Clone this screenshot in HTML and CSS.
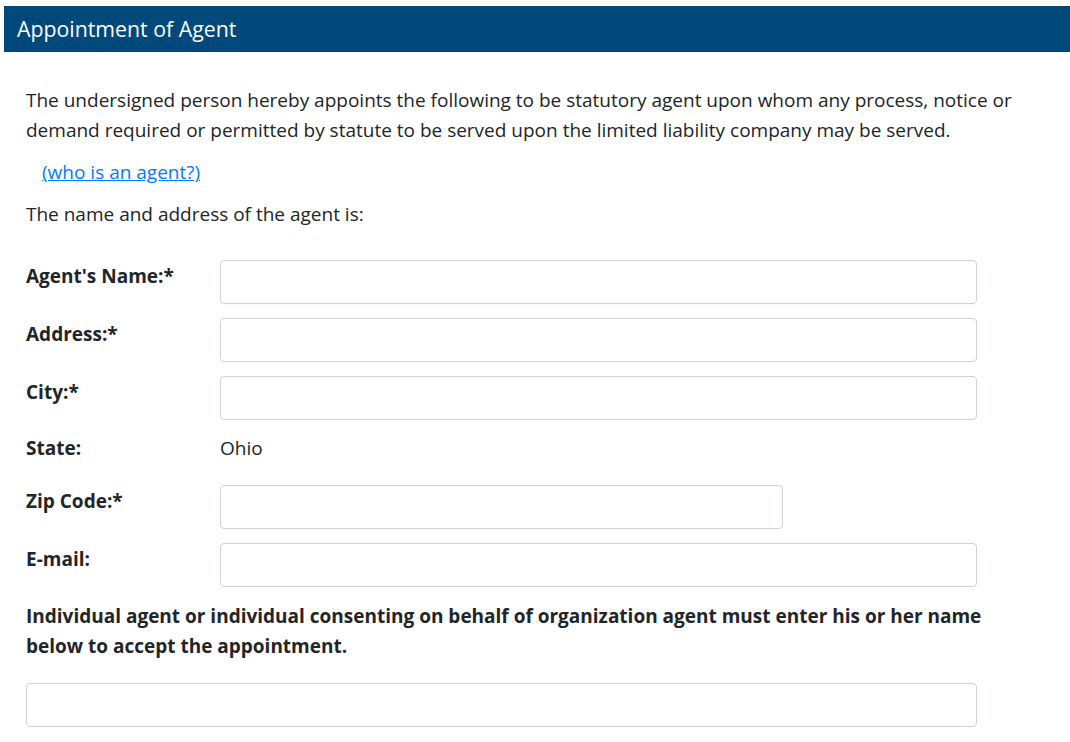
FILE: index.html
```html
<!DOCTYPE html>
<html lang="en">
<head>
<meta charset="utf-8">
<title>Appointment of Agent</title>
<link rel="stylesheet" href="styles.css">
</head>
<body>
<section class="panel">
  <h2 class="panel-title">Appointment of Agent</h2>
  <div class="panel-body">
    <p class="intro">The undersigned person hereby appoints the following to be statutory agent upon whom any process, notice or demand required or permitted by statute to be served upon the limited liability company may be served.</p>
    <p class="help"><a href="#">(who is an agent?)</a></p>
    <p class="lead">The name and address of the agent is:</p>
    <form class="form">
      <div class="row">
        <label class="label" for="name">Agent's Name:*</label>
        <input class="input" id="name" type="text">
      </div>
      <div class="row">
        <label class="label" for="addr">Address:*</label>
        <input class="input" id="addr" type="text">
      </div>
      <div class="row">
        <label class="label" for="city">City:*</label>
        <input class="input" id="city" type="text">
      </div>
      <div class="row row-static">
        <span class="label">State:</span>
        <span class="value">Ohio</span>
      </div>
      <div class="row">
        <label class="label" for="zip">Zip Code:*</label>
        <input class="input input-short" id="zip" type="text">
      </div>
      <div class="row">
        <label class="label" for="email">E-mail:</label>
        <input class="input" id="email" type="text">
      </div>
      <p class="consent">Individual agent or individual consenting on behalf of organization agent must enter his or her name below to accept the appointment.</p>
      <input class="input input-full" type="text" aria-label="Signature">
    </form>
  </div>
</section>
</body>
</html>
```
FILE: styles.css
```css
html, body {
  margin: 0;
  padding: 0;
  background: #fff;
}
body {
  font-family: "Open Sans", "Noto Sans", sans-serif;
  font-size: 19px;
  line-height: 30px;
  color: #212529;
}
.panel {
  padding: 6px 0 0 4px;
}
.panel-title {
  margin: 0;
  background: #00497a;
  color: #fff;
  font-weight: 400;
  font-size: 21.3px;
  line-height: 46px;
  height: 46px;
  padding: 0 0 0 13px;
}
.panel-body {
  padding: 33px 0 0 22px;
}
.intro {
  margin: 0;
  width: 1010px;
}
.help {
  margin: 12px 0 0 16px;
}
.help a {
  color: #007bff;
  text-decoration: underline;
}
.lead {
  margin: 12px 0 0 0;
}
.form {
  margin-top: 31px;
  width: 970px;
}
.row {
  display: flex;
  align-items: flex-start;
  margin-bottom: 14px;
}
.row-static {
  margin-top: -2px;
  margin-bottom: 22px;
}
.label {
  width: 194px;
  flex: none;
  font-weight: 700;
  padding-top: 1px;
}
.value {
  padding-top: 1px;
}
.input {
  box-sizing: border-box;
  width: 757px;
  height: 44px;
  border: 1px solid #ced4da;
  border-radius: 4px;
  padding: 6px 12px;
  font: inherit;
  background: #fff;
}
.input-short {
  width: 563px;
}
.consent {
  margin: 0;
  font-weight: 700;
}
.input-full {
  display: block;
  width: 951px;
  margin-top: 22px;
}
```
